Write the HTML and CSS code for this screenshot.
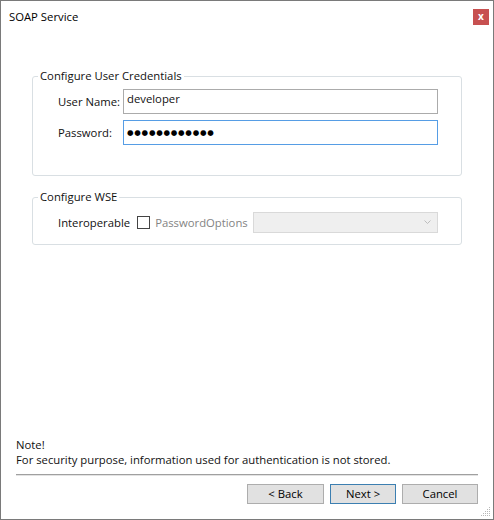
FILE: index.html
```html
<!DOCTYPE html>
<html>
<head>
<meta charset="utf-8">
<link rel="stylesheet" href="styles.css">
</head>
<body>
<div class="window">
  <div class="titlebar">
    <span class="title">SOAP Service</span>
    <span class="close">x</span>
  </div>
  <div class="content">
    <fieldset class="group group-cred">
      <legend>Configure User Credentials</legend>
      <div class="form-grid">
        <label class="lbl">User Name:</label>
        <div class="textbox">developer</div>
        <label class="lbl">Password:</label>
        <div class="textbox focused"><span class="dots">●●●●●●●●●●●●</span></div>
      </div>
    </fieldset>
    <fieldset class="group group-wse">
      <legend>Configure WSE</legend>
      <div class="wse-row">
        <span class="lbl">Interoperable</span>
        <span class="checkbox"></span>
        <span class="disabled-text">PasswordOptions</span>
        <div class="select">
          <svg class="chev" width="7" height="5" viewBox="0 0 7 5"><path d="M0.5 0.5 L3.5 3.5 L6.5 0.5" fill="none" stroke="#bdbdbd" stroke-width="1"/></svg>
        </div>
      </div>
    </fieldset>
  </div>
  <div class="footer">
    <div class="note">
      <div>Note!</div>
      <div>For security purpose, information used for authentication is not stored.</div>
    </div>
    <div class="separator"></div>
    <div class="buttons">
      <button class="btn btn-back">&lt; Back</button>
      <button class="btn btn-next">Next &gt;</button>
      <button class="btn btn-cancel">Cancel</button>
    </div>
    <svg class="grip" width="10" height="10" viewBox="0 0 10 10">
      <g fill="#b8b8b8">
        <rect x="8" y="0" width="1" height="1"/>
        <rect x="6" y="2" width="1" height="1"/><rect x="8" y="2" width="1" height="1"/>
        <rect x="4" y="4" width="1" height="1"/><rect x="6" y="4" width="1" height="1"/><rect x="8" y="4" width="1" height="1"/>
        <rect x="2" y="6" width="1" height="1"/><rect x="4" y="6" width="1" height="1"/><rect x="6" y="6" width="1" height="1"/><rect x="8" y="6" width="1" height="1"/>
        <rect x="0" y="8" width="1" height="1"/><rect x="2" y="8" width="1" height="1"/><rect x="4" y="8" width="1" height="1"/><rect x="6" y="8" width="1" height="1"/><rect x="8" y="8" width="1" height="1"/>
      </g>
    </svg>
  </div>
</div>
</body>
</html>
```

FILE: styles.css
```css
* { box-sizing: border-box; }
html, body { margin: 0; padding: 0; background: #fff; }
body {
  font-family: "Open Sans", "Noto Sans", sans-serif;
  font-size: 11.3px;
  color: #111;
  line-height: 16px;
}
.window {
  width: 494px;
  height: 520px;
  border: 1px solid #7a7a7a;
  display: flex;
  flex-direction: column;
  background: #fff;
  position: relative;
}
.titlebar {
  height: 67px;
  display: flex;
  align-items: flex-start;
  justify-content: space-between;
  padding: 8px 4px 0 8px;
}
.title {
  font-size: 11.3px;
  color: #000;
  line-height: 16px;
}
.close {
  width: 16px;
  height: 16px;
  background: #c75050;
  color: #fff;
  font-size: 10px;
  font-weight: bold;
  line-height: 14px;
  text-align: center;
}
.content {
  flex: 1;
  padding: 0 31px;
}
.group {
  margin: 0;
  padding: 0;
  border: 1px solid #d9dfe3;
  border-radius: 3px;
  min-width: 0;
}
.group legend {
  margin-left: 5px;
  padding: 0 2px;
  line-height: 16px;
  color: #111;
}
.form-grid {
  display: grid;
  grid-template-columns: 65px 1fr;
  row-gap: 6px;
  padding: 5px 23px 30px 25px;
  align-items: center;
}
.lbl {
  color: #111;
  white-space: nowrap;
}
.textbox {
  height: 25px;
  border: 1px solid #ababab;
  padding: 1px 3px 0 3px;
  display: flex;
  align-items: flex-start;
  line-height: 16px;
}
.textbox.focused {
  border-color: #569de5;
  align-items: center;
  padding-top: 0;
}
.dots {
  font-family: "DejaVu Sans", sans-serif;
  font-size: 7.5px;
  letter-spacing: 0.75px;
  line-height: 10px;
  color: #000;
}
.group-wse {
  margin-top: 13px;
}
.wse-row {
  display: flex;
  align-items: center;
  padding: 7px 23px 11px 25px;
}
.checkbox {
  width: 13px;
  height: 13px;
  border: 1px solid #444;
  background: #fff;
  margin-left: 7px;
}
.disabled-text {
  color: #838383;
  margin-left: 5px;
}
.select {
  margin-left: auto;
  width: 185px;
  height: 21px;
  background: #efefef;
  border: 1px solid #d9d9d9;
  position: relative;
}
.chev {
  position: absolute;
  right: 6px;
  top: 7px;
}
.footer {
  padding: 0 15px 15px 15px;
  position: relative;
}
.note {
  line-height: 15px;
  color: #111;
  padding-bottom: 1px;
}
.separator {
  margin-top: 6px;
  height: 2px;
  border-top: 1px solid #a0a0a0;
  border-bottom: 1px solid #e3e3e3;
}
.buttons {
  display: flex;
  justify-content: flex-end;
  gap: 6px;
  margin-top: 8px;
}
.btn {
  height: 20px;
  background: #e1e1e1;
  border: 1px solid #adadad;
  font-family: inherit;
  font-size: 11.3px;
  line-height: 16px;
  padding: 0;
  color: #000;
}
.btn-back { width: 77px; }
.btn-next { width: 66px; border-color: #3c7fb1; }
.btn-cancel { width: 76px; }
.grip {
  position: absolute;
  right: 2px;
  bottom: 2px;
}
```
